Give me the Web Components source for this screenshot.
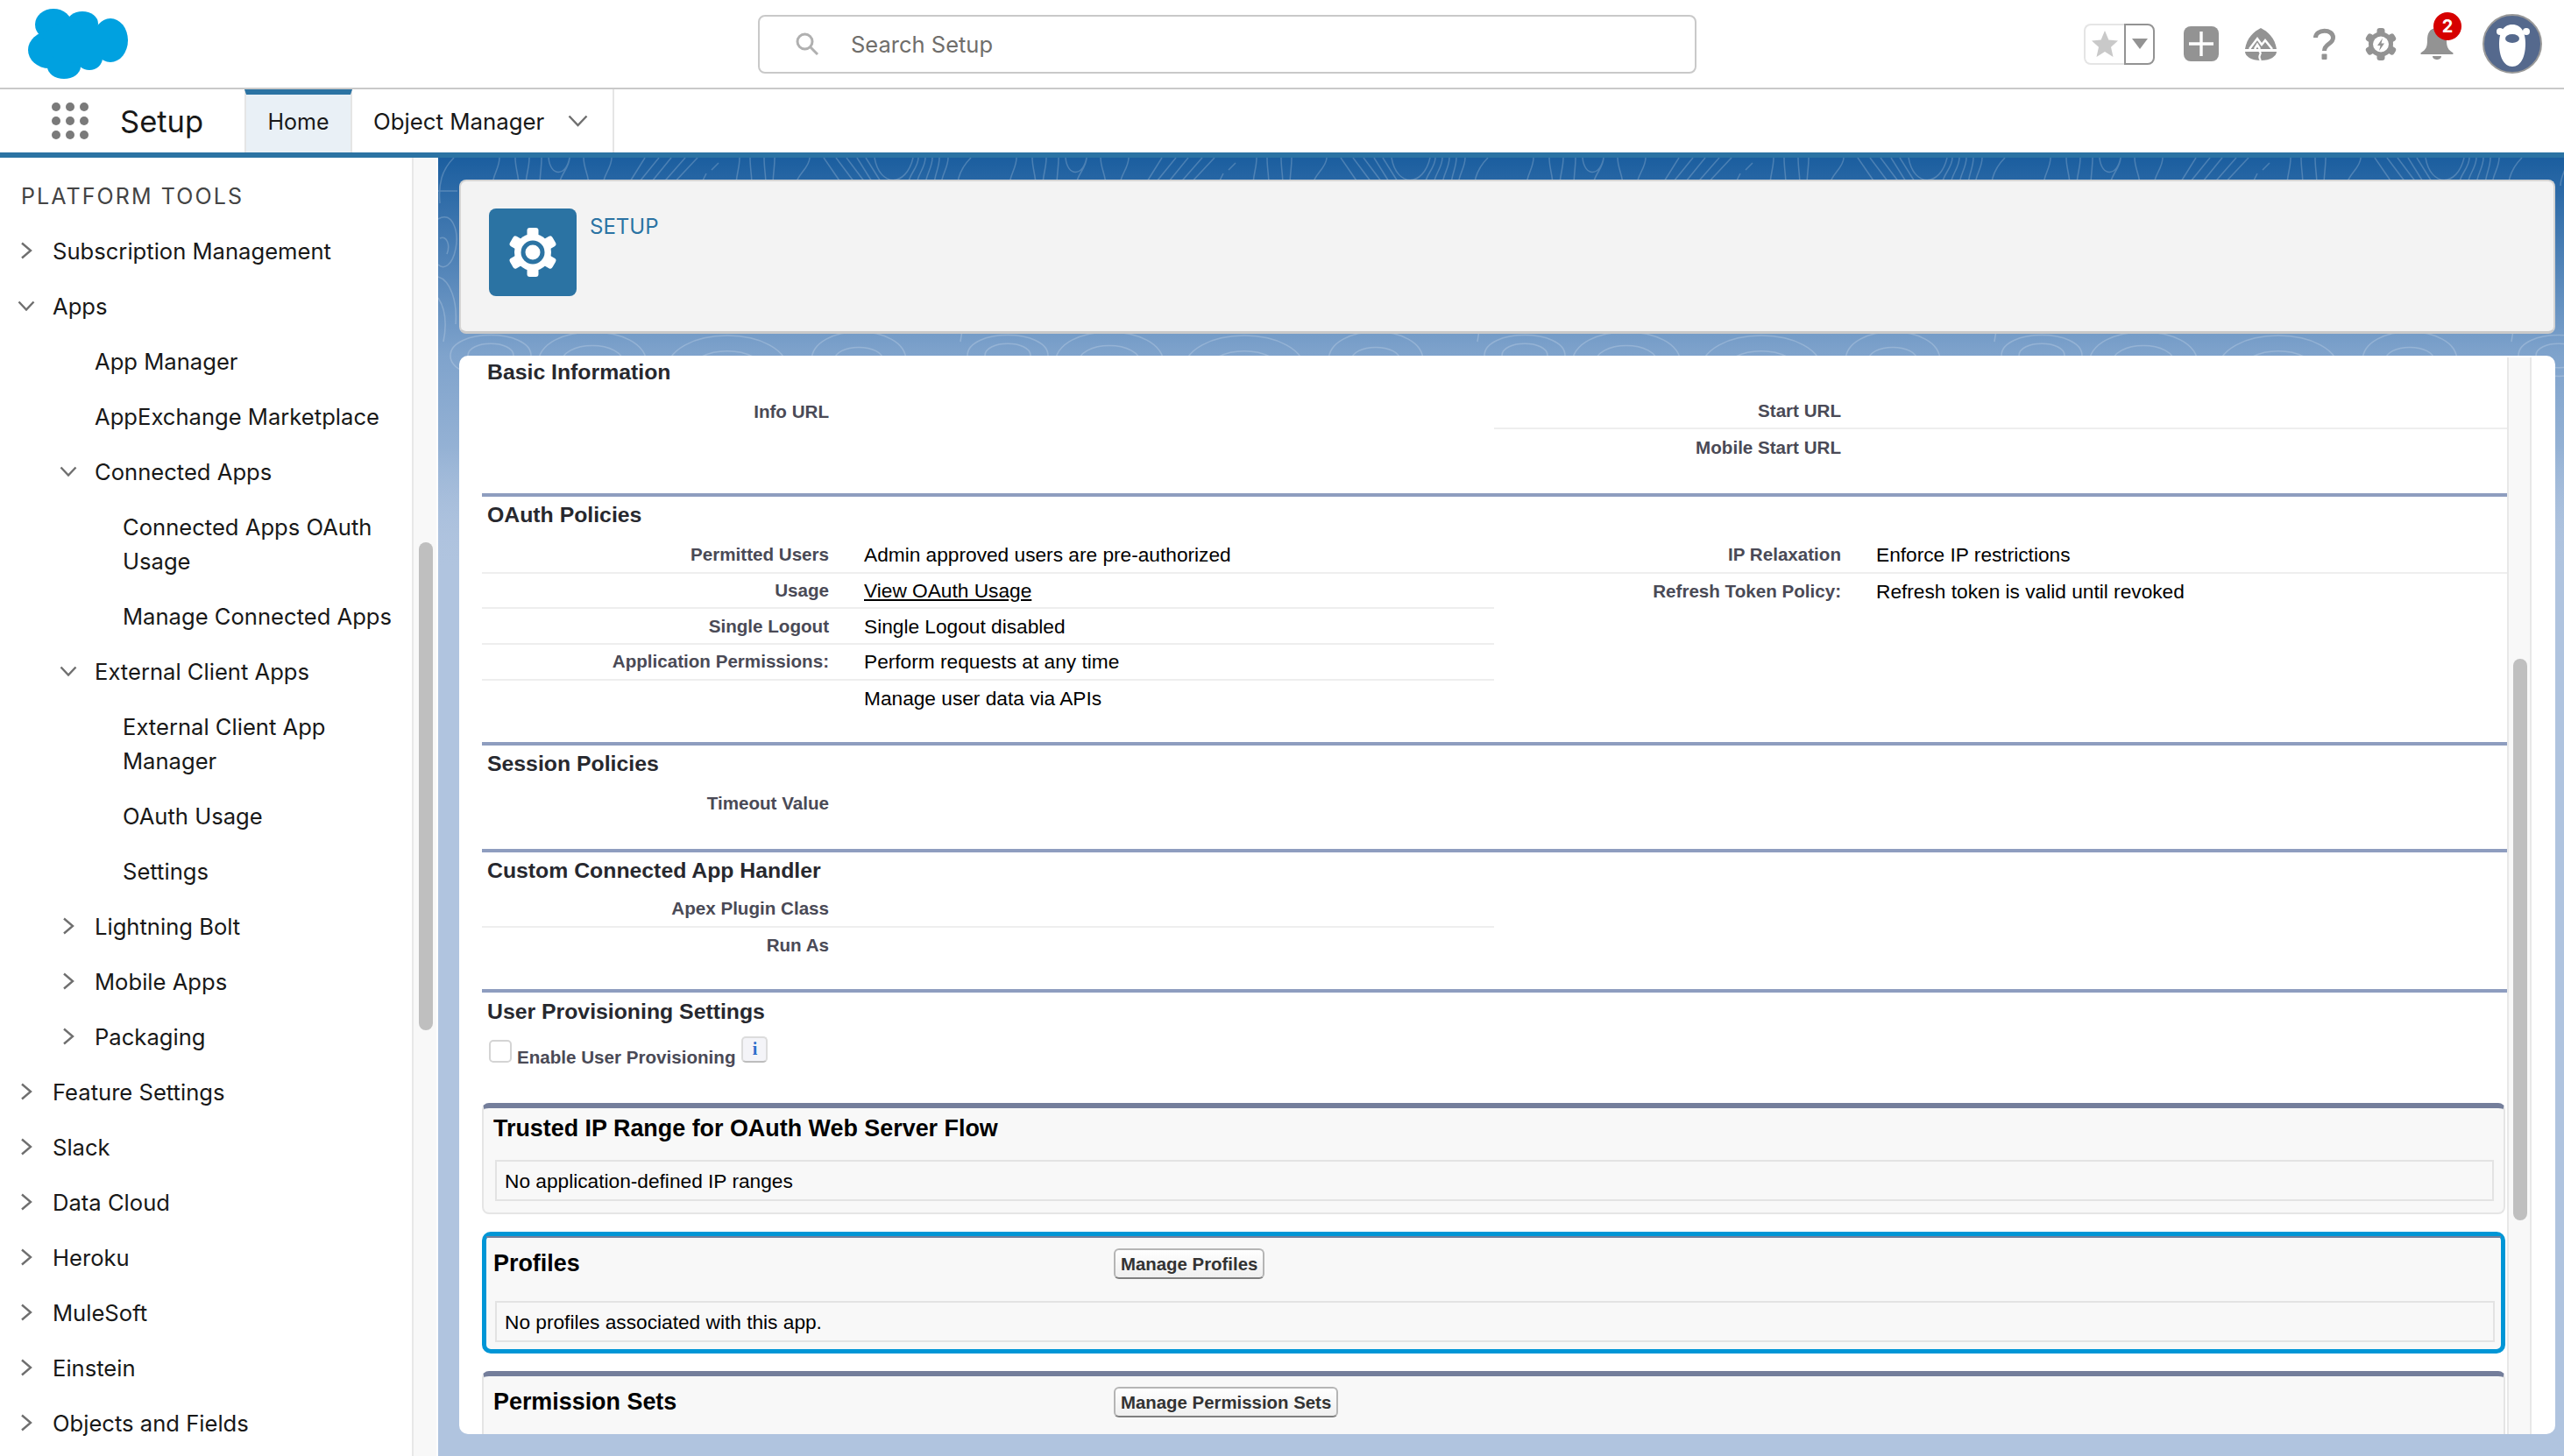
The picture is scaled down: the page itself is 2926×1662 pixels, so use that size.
<!DOCTYPE html>
<html lang="en">
<head>
<meta charset="utf-8">
<title>Setup</title>
<style>
  html, body { margin: 0; height: 100%; overflow: hidden; background: #fff; }
  body { display: flex; flex-direction: column; font-family: Inter, "Liberation Sans", sans-serif; }
</style>
</head>
<body>
<sf-header></sf-header>
<sf-nav></sf-nav>
<sf-workspace>
  <sf-tree slot="tree">
    <sf-tree-item state="closed">Subscription Management</sf-tree-item>
    <sf-tree-item state="open">Apps</sf-tree-item>
    <sf-tree-item level="2">App Manager</sf-tree-item>
    <sf-tree-item level="2">AppExchange Marketplace</sf-tree-item>
    <sf-tree-item level="2" state="open">Connected Apps</sf-tree-item>
    <sf-tree-item level="3">Connected Apps OAuth Usage</sf-tree-item>
    <sf-tree-item level="3">Manage Connected Apps</sf-tree-item>
    <sf-tree-item level="2" state="open">External Client Apps</sf-tree-item>
    <sf-tree-item level="3">External Client App Manager</sf-tree-item>
    <sf-tree-item level="3">OAuth Usage</sf-tree-item>
    <sf-tree-item level="3">Settings</sf-tree-item>
    <sf-tree-item level="2" state="closed">Lightning Bolt</sf-tree-item>
    <sf-tree-item level="2" state="closed">Mobile Apps</sf-tree-item>
    <sf-tree-item level="2" state="closed">Packaging</sf-tree-item>
    <sf-tree-item state="closed">Feature Settings</sf-tree-item>
    <sf-tree-item state="closed">Slack</sf-tree-item>
    <sf-tree-item state="closed">Data Cloud</sf-tree-item>
    <sf-tree-item state="closed">Heroku</sf-tree-item>
    <sf-tree-item state="closed">MuleSoft</sf-tree-item>
    <sf-tree-item state="closed">Einstein</sf-tree-item>
    <sf-tree-item state="closed">Objects and Fields</sf-tree-item>
  </sf-tree>
  <sf-banner slot="main"></sf-banner>
  <sf-panel slot="main">
    <sf-section heading="Basic Information" first>
      <sf-field slot="left" label="Info URL" last></sf-field>
      <sf-field slot="right" label="Start URL"></sf-field>
      <sf-field slot="right" label="Mobile Start URL" last></sf-field>
    </sf-section>
    <sf-section heading="OAuth Policies">
      <sf-field slot="left" label="Permitted Users">Admin approved users are pre-authorized</sf-field>
      <sf-field slot="left" label="Usage"><sf-link>View OAuth Usage</sf-link></sf-field>
      <sf-field slot="left" label="Single Logout">Single Logout disabled</sf-field>
      <sf-field slot="left" label="Application Permissions:">Perform requests at any time</sf-field>
      <sf-field slot="left" last>Manage user data via APIs</sf-field>
      <sf-field slot="right" label="IP Relaxation">Enforce IP restrictions</sf-field>
      <sf-field slot="right" label="Refresh Token Policy:" last>Refresh token is valid until revoked</sf-field>
    </sf-section>
    <sf-section heading="Session Policies" short style="padding-bottom:32px">
      <sf-field slot="left" label="Timeout Value" last></sf-field>
    </sf-section>
    <sf-section heading="Custom Connected App Handler" short>
      <sf-field slot="left" label="Apex Plugin Class"></sf-field>
      <sf-field slot="left" label="Run As" last></sf-field>
    </sf-section>
    <sf-section heading="User Provisioning Settings" tight>
      <sf-checkbox slot="wide">Enable User Provisioning</sf-checkbox>
    </sf-section>
    <sf-block heading="Trusted IP Range for OAuth Web Server Flow">No application-defined IP ranges</sf-block>
    <sf-block heading="Profiles" action="Manage Profiles" focused>No profiles associated with this app.</sf-block>
    <sf-block heading="Permission Sets" action="Manage Permission Sets"></sf-block>
  </sf-panel>
</sf-workspace>

<script>
// every element is the same thing: an open shadow root filled from a string
const shell = (name, html, attrs) => {
  class El extends HTMLElement {
    constructor() {
      super();
      this.attachShadow({mode: 'open'});
    }
    connectedCallback() {
      this.shadowRoot.innerHTML = typeof html === 'function' ? html(this) : html;
    }
  }
  customElements.define(name, El);
};

const chevron = {
  closed: '<svg width="14" height="20" viewBox="0 0 14 20"><path d="M2 1.5 12 10 2 18.5" fill="none" stroke="#6f6f6f" stroke-width="2.4"/></svg>',
  open: '<svg width="20" height="12" viewBox="0 0 20 12"><path d="M1.5 1.5 10 10.5 18.5 1.5" fill="none" stroke="#6f6f6f" stroke-width="2.4"/></svg>',
};

// six teeth round a disc, used by the banner and the header
const teeth = (r, w, h, fill) => [0, 60, 120, 180, 240, 300].map(a =>
  `<rect x="${-w / 2}" y="${-r}" width="${w}" height="${h}" rx="3" fill="${fill}" transform="rotate(${a})"/>`).join('');

// contour lines of the page background, one tile of 590 x 470
const contour = (() => {
  const p = [];
  const up = [[70, 62], [88, 92], [104, 100], [118, 116], [150, 138], [166, 172], [198, 188], [344, 340], [356, 358], [372, 374], [384, 382], [424, 408], [548, 536], [556, 546], [564, 556], [572, 566], [582, 574]];
  up.forEach(([a, b]) => p.push(`M${a} 0C${a} 12 ${b} 20 ${b} 32`));
  [[236, 216], [252, 226], [266, 240], [282, 254], [296, 266]].forEach(([a, b]) => p.push(`M${a} 0L${b} 32`));
  [[440, 462], [454, 478], [466, 490], [478, 498], [488, 508]].forEach(([a, b]) => p.push(`M${a} 0L${b} 32`));
  p.push('M126 0C128 22 146 22 150 0', 'M498 0C504 34 534 34 542 0', 'M18 0C4 14 0 30 2 52');
  p.push('M306 18L300 30M320 6L312 14');
  [[60, 226, 46, 24], [60, 226, 26, 14], [176, 236, 62, 38], [176, 236, 36, 22], [330, 246, 70, 44], [330, 246, 42, 26], [480, 232, 54, 34], [480, 232, 28, 16]].forEach(([x, y, a, b]) => {
    p.push(`M${x - a} ${y}C${x - a} ${y - b * 1.3} ${x + a} ${y - b * 1.3} ${x + a} ${y}C${x + a} ${y + b * 1.3} ${x - a} ${y + b * 1.3} ${x - a} ${y}Z`);
  });
  p.push('M0 70C16 60 24 84 20 104C16 124 6 128 0 122', 'M0 136C14 140 22 164 20 190', 'M2 92C10 88 14 100 10 110', 'M0 38H22', 'M0 160C8 172 10 190 6 210');
  const svg = `<svg xmlns="http://www.w3.org/2000/svg" width="590" height="470"><path d="${p.join('')}" fill="none" stroke="#fff" stroke-opacity=".2" stroke-width="1.5"/></svg>`;
  return `url("data:image/svg+xml,${encodeURIComponent(svg)}")`;
})();

shell('sf-header', `
  <style>
    :host { display: flex; align-items: center; flex: none; height: 100px; border-bottom: 2px solid #c9c9c9; box-sizing: content-box; background: #fff; }
    .logo { margin-left: 32px; flex: none; }
    .search { display: flex; align-items: center; flex: none; box-sizing: border-box; margin-left: 719px; width: 1071px; height: 67px; border: 2px solid #c9c9c9; border-radius: 8px; padding-left: 41px; color: #706e6b; font-size: 25.500px; }
    .search svg { margin-right: 37px; }
    .tools { display: flex; align-items: center; margin-left: 442px; }
    .tools > * { flex: none; display: block; }
    .fav { display: flex; box-sizing: border-box; width: 81px; height: 47px; }
    .fav i { display: flex; align-items: center; justify-content: center; box-sizing: border-box; height: 47px; }
    .fav .star { width: 46px; border: 2px solid #e5e5e5; border-right: 0; border-radius: 8px 0 0 8px; }
    .fav .more { width: 35px; border: 2px solid #939393; border-radius: 0 8px 8px 0; }
    .bell { position: relative; width: 38px; height: 36px; }
    .badge { position: absolute; left: 15px; top: -18px; width: 32px; height: 32px; border-radius: 50%; background: #d60000; color: #fff; font: 700 20px/32px Inter, "Liberation Sans", sans-serif; text-align: center; }
  </style>
  <svg class="logo" width="114" height="80" viewBox="0 0 114 80" fill="#00a1e0">
    <ellipse cx="29" cy="18" rx="21" ry="18"/><ellipse cx="62" cy="17" rx="18" ry="14"/><ellipse cx="94" cy="36" rx="20" ry="25"/>
    <ellipse cx="24" cy="47" rx="24" ry="21"/><ellipse cx="41" cy="66" rx="19" ry="14"/><ellipse cx="70" cy="56" rx="15" ry="14"/>
    <ellipse cx="55" cy="38" rx="38" ry="24"/>
  </svg>
  <div class="search">
    <svg width="26" height="26" viewBox="0 0 26 26" fill="none" stroke="#b0b0b0" stroke-width="3"><circle cx="10.5" cy="10.5" r="8.5"/><path d="M16.5 16.5 25 25"/></svg>
    Search Setup
  </div>
  <div class="tools">
    <div class="fav">
      <i class="star"><svg width="30" height="30" viewBox="0 0 30 30"><path d="M15 0l4.4 10.6L30 11.500l-8 7.300 2.500 11.200L15 24l-9.500 6L8 18.800 0 11.500l10.600-.9z" fill="#c9c9c9"/></svg></i>
      <i class="more"><svg width="18" height="12" viewBox="0 0 18 12"><path d="M0 0h18L9 12z" fill="#939393"/></svg></i>
    </div>
    <svg style="margin-left:33px" width="40" height="40" viewBox="0 0 40 40"><rect width="40" height="40" rx="8" fill="#939393"/><path d="M20 6v28M6 20h28" stroke="#fff" stroke-width="3.400"/></svg>
    <svg style="margin-left:29px" width="38" height="37" viewBox="0 0 38 37" fill="#939393">
      <path d="M19 0C27 4 35 11 37 24H1C3 11 11 4 19 0Z"/>
      <path d="M1 27H37C37 32 30 37 19 37C8 37 1 32 1 27Z"/>
      <path d="M6 24 15 12 20 19 24 14 32 24M12 24 15 19 18 24" fill="none" stroke="#fff" stroke-width="2.500"/>
      <path d="M17 27C22 29 14 31 19 37" fill="none" stroke="#fff" stroke-width="2.200"/>
    </svg>
    <svg style="margin-left:41px" width="25" height="36" viewBox="0 0 25 36" fill="none"><path d="M2.500 11C2.500 1 22.500 .5 22.500 11C22.500 18.500 12.500 17.500 12.500 26" stroke="#939393" stroke-width="5"/><rect x="9.500" y="29.500" width="6" height="6.500" rx="1" fill="#939393"/></svg>
    <svg style="margin-left:34px" width="36" height="37" viewBox="-18 -18.500 36 37">
      <circle r="14" fill="#939393"/>${teeth(18.5, 9, 10, '#939393')}
      <circle r="9" fill="#fff"/><path d="M2 -7-4 1.500H-.5L-2 7.500 4 -1H.5z" fill="#939393"/>
    </svg>
    <div class="bell" style="margin-left:27px">
      <svg width="38" height="36" viewBox="0 0 38 36" fill="#939393">
        <path d="M19 0C10 0 8 7 8 14C8 22 6 25 1 28C0 29 0 30 2 30H36C38 30 38 29 37 28C32 25 30 22 30 14C30 7 28 0 19 0Z"/>
        <path d="M14 32H24C24 35 21 36 19 36S14 35 14 32Z"/>
      </svg>
      <span class="badge">2</span>
    </div>
    <svg style="margin-left:33px" width="68" height="68" viewBox="0 0 68 68">
      <circle cx="34" cy="34" r="33" fill="#55698d" stroke="#999" stroke-width="2"/>
      <circle cx="20" cy="20" r="4" fill="#fff"/><circle cx="50" cy="20" r="4" fill="#fff"/>
      <path d="M34 12C23 12 19 22 19 34C19 48 24 60 34 60S49 48 49 34C49 22 45 12 34 12Z" fill="#fff"/>
      <ellipse cx="34" cy="28" rx="8" ry="5" fill="#55698d"/>
    </svg>
  </div>
`);

shell('sf-nav', `
  <style>
    :host { display: flex; flex: none; height: 72px; border-bottom: 6px solid #2b73a3; background: #fff; color: #181818; font-size: 25px; }
    .app { display: flex; align-items: center; width: 279px; flex: none; padding-left: 59px; box-sizing: border-box; }
    .app svg { margin-right: 36px; }
    .app span { font-size: 34.500px; }
    .tab { display: flex; align-items: center; box-sizing: border-box; height: 72px; border-right: 2px solid #e5e5e5; }
    .home { width: 123px; justify-content: center; background: #e9f0f6; border-top: 6px solid #2b73a3; border-left: 2px solid #e5e5e5; padding-bottom: 4px; }
    .object { width: 299px; padding-left: 24px; padding-bottom: 0; font-size: 25.800px; }
    .object svg { margin-left: 27px; }
  </style>
  <div class="app">
    <svg width="42" height="42" viewBox="0 0 42 42" fill="#7a7a7a">
      <circle cx="5" cy="5" r="5"/><circle cx="21" cy="5" r="5"/><circle cx="37" cy="5" r="5"/>
      <circle cx="5" cy="21" r="5"/><circle cx="21" cy="21" r="5"/><circle cx="37" cy="21" r="5"/>
      <circle cx="5" cy="37" r="5"/><circle cx="21" cy="37" r="5"/><circle cx="37" cy="37" r="5"/>
    </svg>
    <span>Setup</span>
  </div>
  <div class="tab home">Home</div>
  <div class="tab object">Object Manager
    <svg width="23" height="14" viewBox="0 0 23 14"><path d="M1.500 1.500 11.500 12 21.500 1.500" fill="none" stroke="#6f6f6f" stroke-width="2.400"/></svg>
  </div>
`);

shell('sf-workspace', `
  <style>
    :host { display: flex; flex: 1; min-height: 0; }
    .main { flex: 1; min-width: 0; display: flex; flex-direction: column; gap: 25px; box-sizing: border-box; padding: 25px 10px 25px 24px;
      background:
        linear-gradient(to bottom, rgba(176,196,223,0) 330px, #b0c4df 470px),
        ${contour} 0 0 / 590px 470px repeat-x,
        linear-gradient(to bottom, #1b5e9f 0, #7fa3cc 225px, #b0c4df 470px); }
  </style>
  <slot name="tree"></slot>
  <div class="main"><slot name="main"></slot></div>
`);

shell('sf-tree', `
  <style>
    :host { display: flex; flex: none; width: 500px; background: #fff; }
    .list { width: 470px; flex: none; overflow: hidden; box-sizing: border-box; padding-top: 27px; }
    h2 { margin: 0 0 14px 24px; font: 400 25px/34px Inter, "Liberation Sans", sans-serif; letter-spacing: 2.100px; color: #444; }
    .track { flex: none; width: 30px; box-sizing: border-box; background: #f8f8f8; border-left: 2px solid #e8e8e8; border-right: 2px solid #fff; }
    .thumb { width: 16px; height: 557px; margin: 439px 0 0 6px; border-radius: 8px; background: #bfbfbf; }
  </style>
  <div class="list"><h2>PLATFORM TOOLS</h2><slot></slot></div>
  <div class="track"><div class="thumb"></div></div>
`);

shell('sf-tree-item', el => {
  const level = el.getAttribute('level') || '1';
  const state = el.getAttribute('state');
  const left = {1: 60, 2: 108, 3: 140}[level];
  const center = {1: 30, 2: 78}[level];
  return `
  <style>
    :host { display: block; position: relative; box-sizing: border-box; padding: 12px 10px 12px ${left}px; font-size: 25.600px; line-height: 39px; color: #181818; }
    span { position: absolute; left: ${center - 10}px; top: 21px; width: 20px; height: 20px; display: flex; align-items: center; justify-content: center; }
  </style>
  ${state ? `<span>${chevron[state]}</span>` : ''}<slot></slot>`;
});

shell('sf-banner', `
  <style>
    :host { display: flex; flex: none; box-sizing: border-box; height: 176px; padding: 31px 32px; gap: 15px; background: #f3f3f3; border: 2px solid #d4d4d4; border-bottom: 3px solid #c9c9c9; border-radius: 8px; }
    .icon { display: block; flex: none; width: 100px; height: 100px; }
    .title { font-size: 24px; line-height: 41px; color: #2b73a3; }
  </style>
  <svg class="icon" viewBox="-50 -50 100 100">
    <rect x="-50" y="-50" width="100" height="100" rx="8" fill="#2b73a3"/>
    <circle r="21" fill="#fff"/>${teeth(28, 13, 14, '#fff')}
    <circle r="13.500" fill="#2b73a3"/><circle r="8.500" fill="#fff"/>
  </svg>
  <div class="title">SETUP</div>
`);

shell('sf-panel', `
  <style>
    :host { display: flex; flex: 1; min-height: 0; overflow: hidden; background: #fff; border-radius: 10px; padding-left: 26px; padding-right: 27px; }
    .content { flex: none; width: 2311px; overflow: hidden; }
    .track { flex: none; width: 28px; box-sizing: border-box; margin-top: 2px; background: #f8f8f8; border-left: 2px solid #e8e8e8; border-right: 2px solid #e8e8e8; }
    .thumb { width: 16px; height: 641px; margin: 344px 0 0 5px; border-radius: 8px; background: #bfbfbf; }
  </style>
  <div class="content"><slot></slot></div>
  <div class="track"><div class="thumb"></div></div>
`);

shell('sf-section', el => `
  <style>
    :host { display: block; font-family: "Liberation Sans", Arial, sans-serif; box-sizing: border-box; border-top: 4px solid #8e9dbf; padding-bottom: 30px; }
    :host([first]) { border-top: 0; padding-bottom: 32px; }
    :host([tight]) { padding-bottom: 0; height: 130px; }
    h3 { margin: 0; height: 47px; padding-left: 6px; box-sizing: border-box; font: 700 24.800px/42px "Liberation Sans", Arial, sans-serif; color: #27282e; }
    :host([first]) h3 { height: 43.500px; line-height: 38px; }
    :host([short]) h3 { height: 45px; }
    :host([tight]) h3 { line-height: 44px; }
    .cols { display: grid; grid-template-columns: 1155px 1156px; }
  </style>
  <h3>${el.getAttribute('heading')}</h3>
  <div class="cols"><div><slot name="left"></slot></div><div><slot name="right"></slot></div></div>
  <slot name="wide"></slot>
`);

shell('sf-field', el => `
  <style>
    :host { display: grid; grid-template-columns: 396px 1fr; column-gap: 40px; align-items: center; box-sizing: border-box; height: 40.700px; border-bottom: 2px solid #eee; font: 400 22.700px/38px "Liberation Sans", Arial, sans-serif; color: #000; }
    :host([last]) { border-bottom: 0; }
    b { text-align: right; font-size: 20.600px; color: #4a4a56; white-space: nowrap; }
  </style>
  <b>${el.getAttribute('label') || ''}</b><div><slot></slot></div>
`);

shell('sf-link', `
  <style>:host { text-decoration: underline; color: #000; }</style>
  <slot></slot>
`);

shell('sf-checkbox', `
  <style>
    :host { display: flex; align-items: flex-start; padding: 3px 0 0 8px; font: 700 20.600px/24px "Liberation Sans", Arial, sans-serif; color: #4a4a56; }
    .box { flex: none; width: 26px; height: 26px; margin: 4px 6px 0 0; box-sizing: border-box; border: 2px solid #d4d4d4; border-radius: 5px; background: #fff; }
    .label { margin-top: 12px; }
    .info { flex: none; width: 30px; height: 30px; margin-left: 7px; box-sizing: border-box; border: 2px solid #dcdcdc; border-bottom-color: #bdbdbd; border-radius: 5px; background: #f4f4f8; color: #2c6ecb; font: 700 20px/24px "Liberation Serif", serif; text-align: center; }
  </style>
  <span class="box"></span><span class="label"><slot></slot></span><span class="info">i</span>
`);

shell('sf-block', el => {
  const action = el.getAttribute('action');
  return `
  <style>
    :host { display: block; box-sizing: border-box; width: 2309px; margin-bottom: 20px; font-family: "Liberation Sans", Arial, sans-serif; background: #f8f8f8; border: 2px solid #e5e5e5; border-top: 6px solid #747e9b; border-radius: 8px; --gap-l: 13px; --gap-r: 11px; --gap-b: 13px; }
    :host([focused]) { border: 5px solid #0096d6; border-radius: 10px; --gap-l: 10px; --gap-r: 7px; --gap-b: 8px; }
    :host([focused]) .head { border-top: 2px solid #747e9b; padding-top: 12px; height: 74px; }
    .head { display: flex; box-sizing: border-box; height: 59px; padding-left: calc(var(--gap-l) - 2px); }
    .head.act { height: 72px; padding-top: 12px; }
    h3 { margin: 0; flex: none; width: 708px; font: 700 26.900px/34px "Liberation Sans", Arial, sans-serif; color: #000; }
    .head:not(.act) h3 { width: auto; margin-top: 6px; }
    button { flex: none; height: 35px; padding: 0 6px; border: 2px solid #b5b5b5; border-bottom-color: #7f7f7f; border-radius: 6px; background: linear-gradient(#fff, #efefef); color: #333; font: 700 20.400px/28px "Liberation Sans", Arial, sans-serif; }
    .box { box-sizing: border-box; height: 47px; margin: 0 var(--gap-r) var(--gap-b) var(--gap-l); padding-left: 9px; border: 2px solid #e3e3e3; font-size: 22.700px; line-height: 45px; color: #000; }
  </style>
  <div class="head ${action ? 'act' : ''}"><h3>${el.getAttribute('heading')}</h3>${action ? `<button>${action}</button>` : ''}</div>
  ${el.textContent.trim() ? '<div class="box"><slot></slot></div>' : ''}`;
});
</script>
</body>
</html>
